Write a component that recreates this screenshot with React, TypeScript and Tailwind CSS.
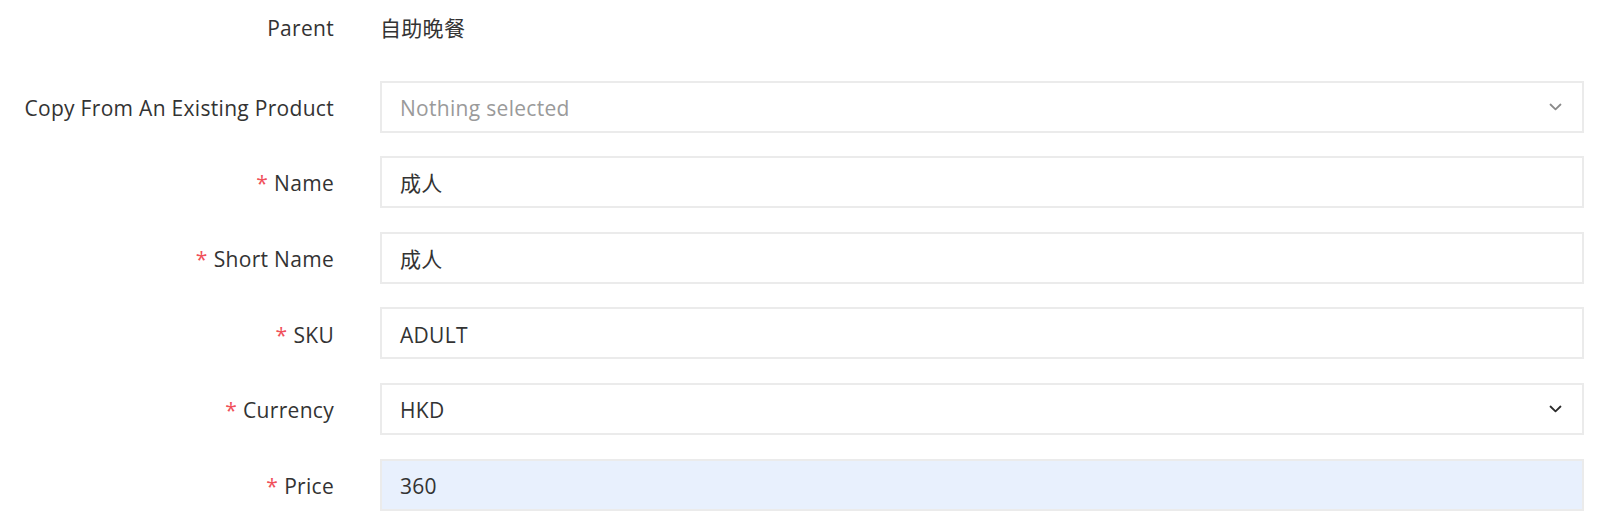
import React from "react";

const Chevron = ({ color }: { color: string }) => (
  <svg width="13" height="8" viewBox="0 0 13 8" fill="none">
    <polyline points="1.5,1.5 6.5,6.3 11.5,1.5" stroke={color} strokeWidth="1.8" strokeLinecap="round" strokeLinejoin="round" />
  </svg>
);

const Label = ({ text, required }: { text: string; required?: boolean }) => (
  <div className="w-[334px] shrink-0 pt-[4px] text-right text-[21px] tracking-[0.3px] text-[#333333]">
    {required && <span className="text-[#f0505a] mr-[6px]">*</span>}
    {text}
  </div>
);

const Field = ({
  value,
  placeholder,
  select,
  chevronColor,
  bg,
}: {
  value?: string;
  placeholder?: string;
  select?: boolean;
  chevronColor?: string;
  bg?: string;
}) => (
  <div
    className={`flex-1 h-[52px] border-2 border-[#ebebeb] flex items-center pl-[18px] pr-[20px] ${
      bg ?? "bg-white"
    }`}
  >
    <span
      className={`flex-1 pt-[4px] text-[21px] tracking-[0.3px] ${
        placeholder ? "text-[#9a9a9a]" : "text-[#333333]"
      }`}
    >
      {value ?? placeholder}
    </span>
    {select && <Chevron color={chevronColor ?? "#333"} />}
  </div>
);

export default function App() {
  return (
    <div
      className="w-[1600px] h-[525px] bg-white pt-[1px] pr-[16px]"
      style={{ fontFamily: '"Open Sans", "Noto Sans CJK TC", sans-serif' }}
    >
      <div className="flex flex-col gap-[23.6px]">
        <div className="flex items-center h-[52px] gap-[46px] mb-[4px]">
          <Label text="Parent" />
          <span className="pt-[4px] text-[21px] tracking-[0.3px] text-[#333333]">自助晚餐</span>
        </div>
        <div className="flex items-center gap-[46px]">
          <Label text="Copy From An Existing Product" />
          <Field placeholder="Nothing selected" select chevronColor="#8a8a8a" />
        </div>
        <div className="flex items-center gap-[46px]">
          <Label text="Name" required />
          <Field value="成人" />
        </div>
        <div className="flex items-center gap-[46px]">
          <Label text="Short Name" required />
          <Field value="成人" />
        </div>
        <div className="flex items-center gap-[46px]">
          <Label text="SKU" required />
          <Field value="ADULT" />
        </div>
        <div className="flex items-center gap-[46px]">
          <Label text="Currency" required />
          <Field value="HKD" select chevronColor="#2b2b2b" />
        </div>
        <div className="flex items-center gap-[46px]">
          <Label text="Price" required />
          <Field value="360" bg="bg-[#e8f0fd]" />
        </div>
      </div>
    </div>
  );
}
